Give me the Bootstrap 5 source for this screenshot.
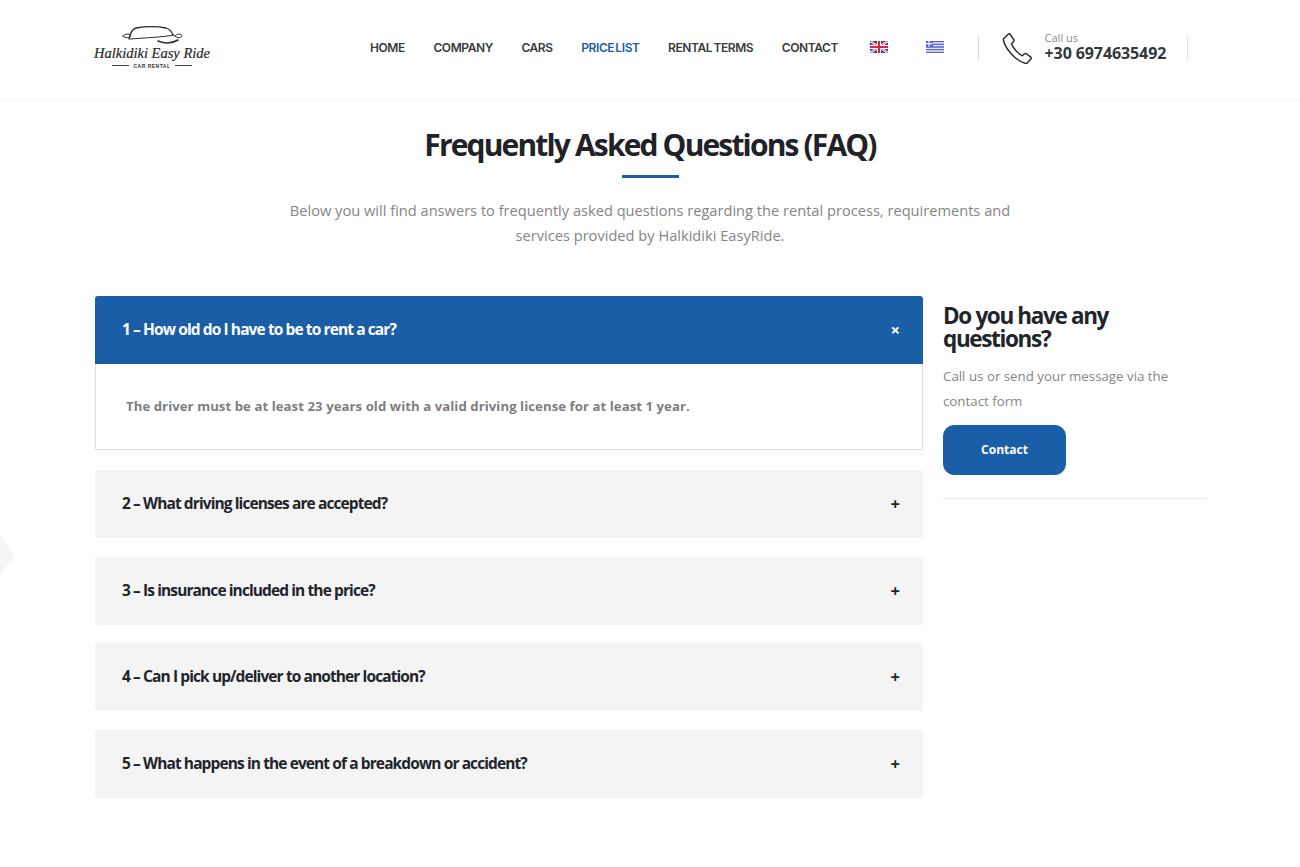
<!DOCTYPE html>
<html lang="en">
<head>
  <meta charset="UTF-8" />
  <meta name="viewport" content="width=device-width, initial-scale=1" />
  <title>Halkidiki Easy Ride - FAQ</title>
  <link href="https://cdn.jsdelivr.net/npm/bootstrap@5.3.0/dist/css/bootstrap.min.css" rel="stylesheet" />
  <style>
    body {
      font-family: "Open Sans", "Liberation Sans", sans-serif;
      background: #fff;
      color: #1f2327;
      position: relative;
      overflow-x: hidden;
    }
    .site-head {
      height: 99px;
      padding: 0 112px 4px 94px;
      box-shadow: 0 1px 4px rgba(0,0,0,0.06);
    }
    .logo-name {
      font-family: "Liberation Serif", serif;
      font-style: italic;
      font-size: 14.5px;
      line-height: 14px;
      color: #2a2a2a;
      white-space: nowrap;
      -webkit-text-stroke: 0.2px #2a2a2a;
    }
    .logo-sub {
      font-family: "Liberation Sans", sans-serif;
      font-size: 5px;
      font-weight: 700;
      letter-spacing: 0.5px;
      line-height: 8px;
      margin-top: 2px;
      color: #333;
      gap: 4px;
    }
    .logo-sub i {
      display: block;
      width: 17px;
      height: 1px;
      background: #444;
    }
    .menu-links {
      gap: 28.5px;
      margin-left: 160px;
    }
    .menu-links a {
      font-family: "Inter", sans-serif;
      font-size: 12px;
      font-weight: 600;
      letter-spacing: -0.4px;
      word-spacing: -1.5px;
      color: #3a3a3a;
      text-decoration: none;
      white-space: nowrap;
    }
    .menu-links a.active-link { color: #1a5ea8; }
    .flag-uk, .flag-gr { display: block; width: 18px; height: 12px; margin-top: -2px; }
    .flag-uk { margin-left: 3px; }
    .flag-gr { margin-left: 38px; }
    .call-box {
      margin-left: 34px;
      height: 26px;
      width: 211px;
      border-left: 1px solid #dcdcdc;
      border-right: 1px solid #e6e6e6;
      padding-left: 23px;
      gap: 13px;
    }
    .call-label { font-size: 11px; line-height: 13px; color: #8a8a8a; margin-top: -2px; }
    .call-num { font-size: 16px; font-weight: 700; line-height: 19px; color: #33373a; letter-spacing: -0.1px; white-space: nowrap; }
    .page-title {
      font-size: 30px;
      font-weight: 700;
      letter-spacing: -1.85px;
      line-height: 40px;
      margin: 26px 0 0;
      color: #1f2327;
    }
    .title-bar {
      width: 57px;
      height: 3px;
      background: #1a5ea8;
      margin: 10px auto 20px;
    }
    .intro-text {
      font-size: 14.63px;
      line-height: 25px;
      color: #858585;
      width: 740px;
      margin: 0 auto 48px;
    }
    .faq-area {
      padding: 0 93px 0 95px;
      gap: 20px;
    }
    .faq-list { width: 828px; flex: none; }
    .faq-item { margin-bottom: 18.5px; }
    .faq-q {
      height: 68px;
      background: #f4f4f4;
      border-radius: 3px;
      padding: 0 23px 0 27px;
      font-size: 15.5px;
      font-weight: 700;
      letter-spacing: -0.9px;
      color: #212529;
    }
    .faq-q.is-open {
      background: #1a5ea8;
      color: #fff;
      border-radius: 3px 3px 0 0;
    }
    .faq-sign { font-size: 16.5px; font-weight: 700; letter-spacing: 0; line-height: 18px; }
    .faq-a {
      height: 86px;
      margin-bottom: 20px;
      padding: 0 30px;
      border: 1px solid #dedede;
      border-top: 0;
      font-size: 13.2px;
      font-weight: 700;
      color: #7e7e7e;
      letter-spacing: 0.05px;
    }
    .side-box { width: 264px; flex: none; }
    .side-title {
      font-size: 22.5px;
      font-weight: 700;
      letter-spacing: -1.35px;
      line-height: 23px;
      margin: 8px 0 14px;
      color: #212529;
    }
    .side-text {
      font-size: 13.3px;
      line-height: 25px;
      color: #858585;
      margin: 0 0 11px;
    }
    .contact-btn {
      width: 123px;
      height: 50px;
      border-radius: 11px;
      background: #1a5ea8;
      border-color: #1a5ea8;
      color: #fff;
      font-size: 12px;
      font-weight: 700;
    }
    .side-rule { margin: 23px 0 0; border-color: #eeeeee; opacity: 1; }
    .edge-mark {
      position: absolute;
      left: -22px;
      top: 531px;
      width: 37px;
      height: 48px;
      background: #f5f5f5;
      clip-path: polygon(0 50%, 50% 0, 100% 50%, 50% 100%);
      z-index: -1;
    }
  </style>
</head>
<body>
  <div class="edge-mark"></div>

  <!-- Header -->
  <header class="site-head d-flex align-items-center">
    <a href="#" class="d-block text-decoration-none text-center">
      <svg width="62" height="20" viewBox="0 0 62 20" class="d-block mx-auto" fill="none" stroke="#2a2a2a" stroke-width="1.3" stroke-linecap="round">
        <path d="M8 13C9 8 11 3 15 2c9-1.500 22-1.500 30 0 3 1 6 4 7 7" />
        <path d="M9 13c14-1 34-2 44-4" stroke-width="1" />
        <path d="M2 10c2-2.500 6-2.500 8-.5-1 2.500-6 3-8 .5z" stroke-width="1" />
        <path d="M54 10c2-2.500 5-2.500 7-.5 0 2.500-5 3-7 .5z" stroke-width="1" />
        <path d="M37 15c6 2.500 14 2.500 20-1" stroke-width="1.600" />
      </svg>
      <div class="logo-name">Halkidiki Easy Ride</div>
      <div class="logo-sub d-flex align-items-center justify-content-center"><i></i>CAR RENTAL<i></i></div>
    </a>
    <nav class="menu-links d-flex align-items-center">
      <a href="#">HOME</a>
      <a href="#">COMPANY</a>
      <a href="#">CARS</a>
      <a href="#" class="active-link">PRICE LIST</a>
      <a href="#">RENTAL TERMS</a>
      <a href="#">CONTACT</a>
      <a href="#" aria-label="English">
        <svg class="flag-uk" viewBox="0 0 18 12">
          <rect width="18" height="12" fill="#2a3f96" />
          <path d="M0 0L18 12M18 0L0 12" stroke="#fff" stroke-width="2.400" />
          <path d="M0 0L18 12M18 0L0 12" stroke="#d8283a" stroke-width="0.800" />
          <path d="M9 0V12M0 6H18" stroke="#fff" stroke-width="4" />
          <path d="M9 0V12M0 6H18" stroke="#d8283a" stroke-width="2.200" />
        </svg>
      </a>
    </nav>
    <a href="#" aria-label="Greek">
      <svg class="flag-gr" viewBox="0 0 18 12">
        <rect width="18" height="12" fill="#5a63d0" />
        <path d="M7 2H18M7 4.700H18M0 7.400H18M0 10H18" stroke="#e8e9fa" stroke-width="1.300" />
        <path d="M3 0V5.400M0 2.700H6.500" stroke="#fff" stroke-width="1.200" />
      </svg>
    </a>
    <div class="call-box d-flex align-items-center">
      <svg width="30" height="32" viewBox="0 0 31 33" fill="none" stroke="#2c2c2c" stroke-width="1.500" stroke-linejoin="round" class="flex-shrink-0">
        <path d="M2 6.500 6.500 2.200c.7-.6 1.500-.5 2 .2l3.700 5.600c.4.6.3 1.300-.2 1.800l-2.300 2.300c1 3.400 7.300 11 11.400 12.400l2.200-2c.6-.5 1.300-.5 1.900-.1l4.500 3.500c.6.500.7 1.300.2 1.900l-3.600 4c-.6.600-1.300.8-2.100.6C14.500 30 3.500 17.500 1.500 8.500c-.2-.8 0-1.500.5-2z" />
      </svg>
      <div>
        <div class="call-label">Call us</div>
        <div class="call-num">+30 6974635492</div>
      </div>
    </div>
  </header>

  <!-- Title -->
  <section class="text-center">
    <h1 class="page-title">Frequently Asked Questions (FAQ)</h1>
    <div class="title-bar"></div>
    <p class="intro-text">Below you will find answers to frequently asked questions regarding the rental process, requirements and services provided by Halkidiki EasyRide.</p>
  </section>

  <!-- FAQ -->
  <main class="faq-area d-flex align-items-start">
    <div class="faq-list">
      <div class="faq-item">
        <div class="faq-q is-open d-flex align-items-center justify-content-between"><span>1 – How old do I have to be to rent a car?</span><span class="faq-sign">×</span></div>
        <div class="faq-a d-flex align-items-center">The driver must be at least 23 years old with a valid driving license for at least 1 year.</div>
      </div>
      <div class="faq-item">
        <div class="faq-q d-flex align-items-center justify-content-between"><span>2 – What driving licenses are accepted?</span><span class="faq-sign">+</span></div>
      </div>
      <div class="faq-item">
        <div class="faq-q d-flex align-items-center justify-content-between"><span>3 – Is insurance included in the price?</span><span class="faq-sign">+</span></div>
      </div>
      <div class="faq-item">
        <div class="faq-q d-flex align-items-center justify-content-between"><span>4 – Can I pick up/deliver to another location?</span><span class="faq-sign">+</span></div>
      </div>
      <div class="faq-item">
        <div class="faq-q d-flex align-items-center justify-content-between"><span>5 – What happens in the event of a breakdown or accident?</span><span class="faq-sign">+</span></div>
      </div>
    </div>
    <aside class="side-box">
      <h2 class="side-title">Do you have any questions?</h2>
      <p class="side-text">Call us or send your message via the contact form</p>
      <a href="#" class="btn contact-btn d-flex align-items-center justify-content-center">Contact</a>
      <hr class="side-rule" />
    </aside>
  </main>

  <script src="https://cdn.jsdelivr.net/npm/bootstrap@5.3.0/dist/js/bootstrap.bundle.min.js"></script>
</body>
</html>
